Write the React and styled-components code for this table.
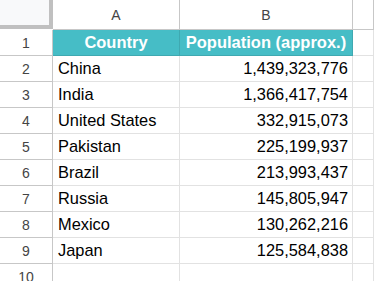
import React from 'react';
import styled, { createGlobalStyle } from 'styled-components';

const GlobalStyle = createGlobalStyle`
  body {
    margin: 0;
    background: #ffffff;
    font-family: "Liberation Sans", Arial, sans-serif;
  }
`;

const rows = [
    ['China', '1,439,323,776'],
    ['India', '1,366,417,754'],
    ['United States', '332,915,073'],
    ['Pakistan', '225,199,937'],
    ['Brazil', '213,993,437'],
    ['Russia', '145,805,947'],
    ['Mexico', '130,262,216'],
    ['Japan', '125,584,838'],
];

const App = () => {
    return (
        <>
            <GlobalStyle />
            <Sheet>
                <Corner />
                <ColHeader>A</ColHeader>
                <ColHeader>B</ColHeader>
                <ColHeader />

                <RowHeader>1</RowHeader>
                <TitleCell>Country</TitleCell>
                <TitleCell>Population (approx.)</TitleCell>
                <Cell />

                {rows.map(([country, pop], index) => (
                    <React.Fragment key={country}>
                        <RowHeader>{index + 2}</RowHeader>
                        <Cell>{country}</Cell>
                        <Cell $align="right">{pop}</Cell>
                        <Cell />
                    </React.Fragment>
                ))}

                <RowHeader>10</RowHeader>
                <Cell />
                <Cell />
                <Cell />
            </Sheet>
        </>
    );
};

const Sheet = styled.div`
    display: grid;
    grid-template-columns: 53px 127px 173px 1fr;
    grid-template-rows: 30px repeat(10, 26px);
    width: 374px;
    height: 281px;
    overflow: hidden;
    background: #ffffff;
`;

const Corner = styled.div`
    box-sizing: border-box;
    background: #f8f9fa;
    border-right: 4px solid #c0c0c0;
    border-bottom: 4px solid #c0c0c0;
    height: 29px;
    border-bottom-width: 4px;
`;

const ColHeader = styled.div`
    box-sizing: border-box;
    display: flex;
    align-items: center;
    justify-content: center;
    border-right: 1px solid #c7c7c7;
    border-bottom: 1px solid #c7c7c7;
    color: #444444;
    font-size: 14px;
`;

const RowHeader = styled.div`
    box-sizing: border-box;
    display: flex;
    align-items: center;
    justify-content: center;
    border-right: 1px solid #c7c7c7;
    border-bottom: 1px solid #c7c7c7;
    color: #444444;
    font-size: 14px;
`;

const Cell = styled.div`
    box-sizing: border-box;
    display: flex;
    align-items: center;
    justify-content: ${({ $align }) => ($align === 'right' ? 'flex-end' : 'flex-start')};
    padding: 0 4px 0 5px;
    border-right: 1px solid #e2e2e2;
    border-bottom: 1px solid #e2e2e2;
    color: #000000;
    font-size: 16.4px;
    white-space: nowrap;
`;

const TitleCell = styled.div`
    box-sizing: border-box;
    display: flex;
    align-items: center;
    justify-content: center;
    background: #46bdc6;
    border-right: 1px solid #3fa9b1;
    border-bottom: 1px solid #3fa9b1;
    color: #ffffff;
    font-weight: bold;
    font-size: 16.5px;
    white-space: nowrap;
    overflow: hidden;
`;

export default App;
